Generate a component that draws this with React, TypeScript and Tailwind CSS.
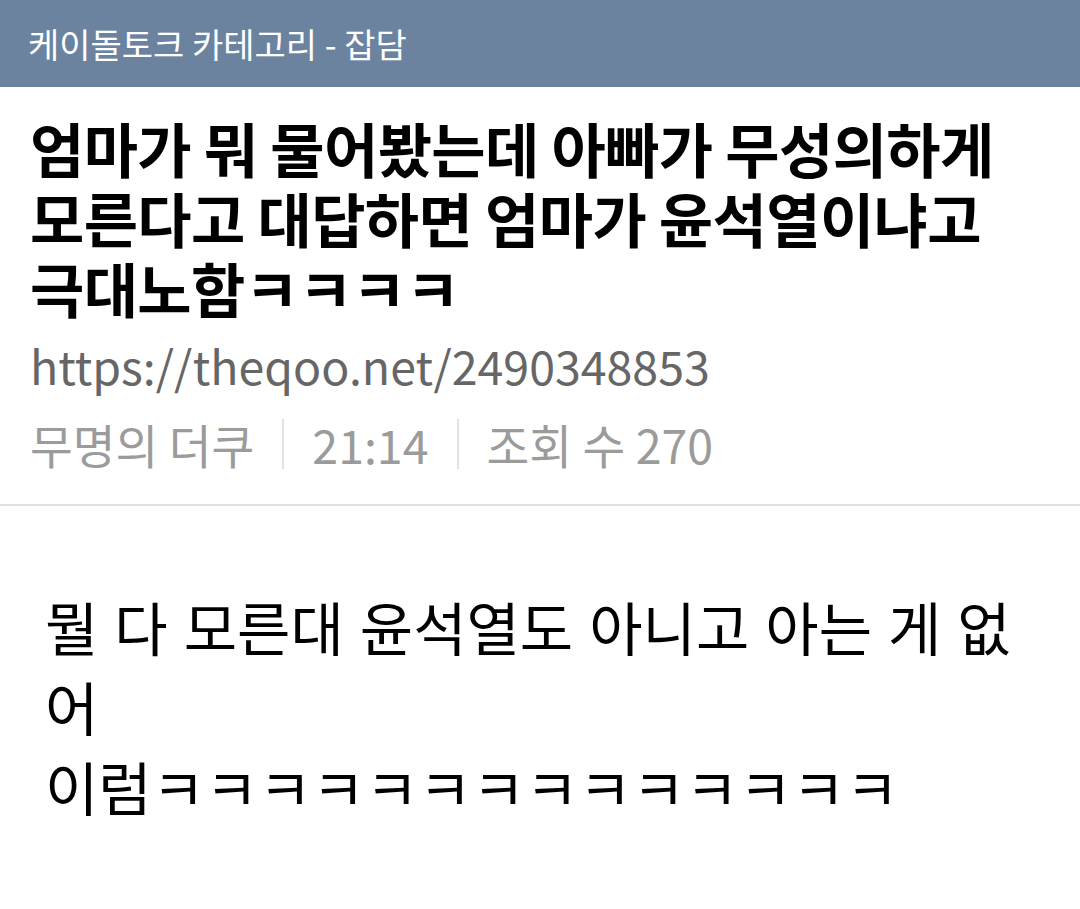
const KR = "font-['Noto_Sans_CJK_KR','Noto_Sans',sans-serif]";

function Header() {
  return (
    <div className="flex h-[87px] items-center bg-[#6b839f] px-[28px]">
      <span className="text-[34px] leading-none text-white">케이돌토크 카테고리 - 잡담</span>
    </div>
  );
}

function Meta() {
  return (
    <div className="flex items-center text-[46.5px] leading-none text-[#9b9b9b]">
      <span>무명의 더쿠</span>
      <span className="mx-[28px] h-[50px] w-[2px] bg-[#e2e2e2]" />
      <span>21:14</span>
      <span className="mx-[28px] h-[50px] w-[2px] bg-[#e2e2e2]" />
      <span>조회 수 270</span>
    </div>
  );
}

export default function App() {
  return (
    <div className={`${KR} min-h-[909px] w-[1080px] bg-white`}>
      <Header />
      <div className="px-[30px] pt-[26px]">
        <h1 className="text-[59px] font-bold leading-[70px] tracking-[-0.6px] text-black">
          엄마가 뭐 물어봤는데 아빠가 무성의하게
          <br />
          모른다고 대답하면 엄마가 윤석열이냐고
          <br />
          극대노함ㅋㅋㅋㅋ
        </h1>
        <div className="mt-[12px] text-[46.5px] leading-[60px] text-[#666666]">https://theqoo.net/2490348853</div>
        <div className="mt-[24px]">
          <Meta />
        </div>
      </div>
      <div className="mt-[35px] h-[2px] bg-[#e0e0e0]" />
      <div className="whitespace-nowrap px-[45px] pt-[80px] text-[58px] leading-[80px] text-black [word-spacing:3px]">
        뭘 다 모른대 윤석열도 아니고 아는 게 없
        <br />
        어
        <br />
        이럼ㅋㅋㅋㅋㅋㅋㅋㅋㅋㅋㅋㅋㅋㅋ
      </div>
    </div>
  );
}
